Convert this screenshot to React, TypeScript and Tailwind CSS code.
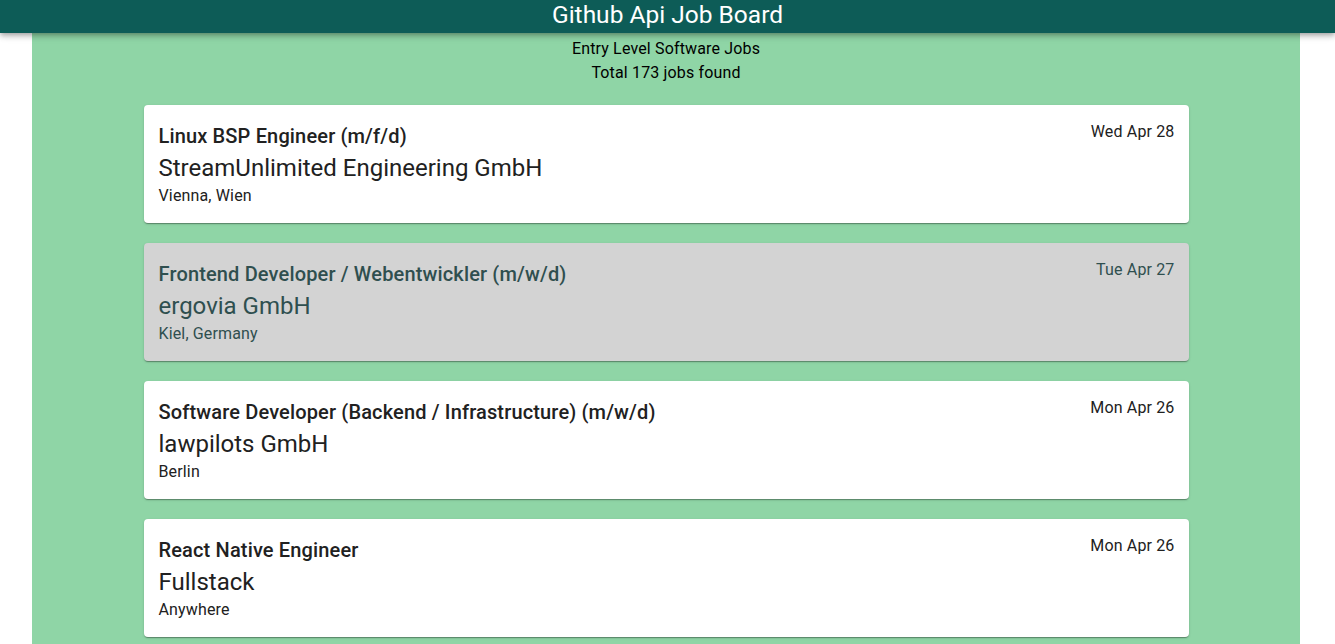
import React from 'react';

type Job = {
  title: string;
  company: string;
  location: string;
  date: string;
  highlight?: boolean;
};

const jobs: Job[] = [
  { title: 'Linux BSP Engineer (m/f/d)', company: 'StreamUnlimited Engineering GmbH', location: 'Vienna, Wien', date: 'Wed Apr 28' },
  { title: 'Frontend Developer / Webentwickler (m/w/d)', company: 'ergovia GmbH', location: 'Kiel, Germany', date: 'Tue Apr 27', highlight: true },
  { title: 'Software Developer (Backend / Infrastructure) (m/w/d)', company: 'lawpilots GmbH', location: 'Berlin', date: 'Mon Apr 26' },
  { title: 'React Native Engineer', company: 'Fullstack', location: 'Anywhere', date: 'Mon Apr 26' },
];

function JobCard({ job }: { job: Job }) {
  return (
    <div
      className={`flex justify-between rounded pl-[15px] pr-[14px] pt-[15px] h-[118px] shadow-[0_2px_1px_-1px_rgba(0,0,0,0.2),0_1px_1px_0_rgba(0,0,0,0.14),0_1px_3px_0_rgba(0,0,0,0.12)] ${
        job.highlight ? 'bg-[#d3d3d3] text-[#2f4f4f]' : 'bg-white text-[#212121]'
      }`}
    >
      <div className="flex flex-col">
        <div className="text-[20px] font-medium leading-[32px] tracking-[0.0075em]">{job.title}</div>
        <div className="text-[24px] leading-[32px]">{job.company}</div>
        <div className="text-[16px] leading-[24px] tracking-[0.00938em]">{job.location}</div>
      </div>
      <div className="text-[16px] leading-[24px] tracking-[0.00938em]">{job.date}</div>
    </div>
  );
}

export default function App() {
  return (
    <div className="min-h-screen bg-white font-['Roboto',sans-serif]">
      <header className="relative z-10 h-[33px] bg-[#0d5c57] text-white text-center text-[24.5px] leading-[30px] font-normal shadow-[0_2px_4px_-1px_rgba(0,0,0,0.2),0_4px_5px_0_rgba(0,0,0,0.14),0_1px_10px_0_rgba(0,0,0,0.12)]">
        Github Api Job Board
      </header>
      <main className="ml-[32px] mr-[35px] bg-[#8fd5a6] pt-[4px] pb-[20px] min-h-[611px]">
        <div className="text-center text-[16px] leading-[24px] tracking-[0.00938em] text-black">
          <div>Entry Level Software Jobs</div>
          <div>Total 173 jobs found</div>
        </div>
        <div className="mx-auto mt-[20px] w-[1045px] flex flex-col gap-[20px]">
          {jobs.map((job) => (
            <JobCard key={job.title} job={job} />
          ))}
        </div>
      </main>
    </div>
  );
}
